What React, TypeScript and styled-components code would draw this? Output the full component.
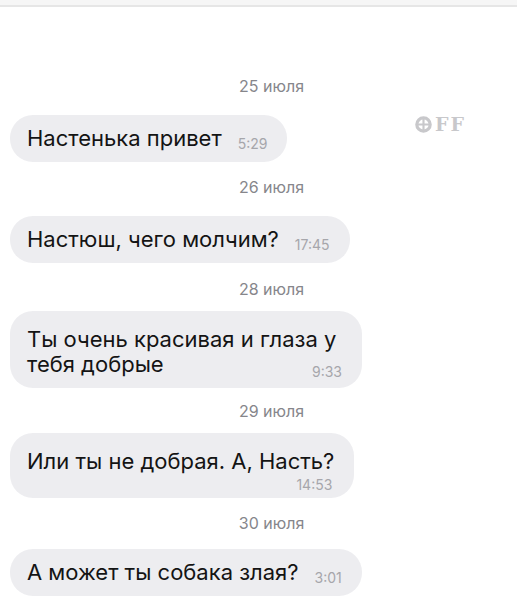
import styled, { createGlobalStyle } from "styled-components";

const GlobalStyle = createGlobalStyle`
  body {
    margin: 0;
    background: #ffffff;
    font-family: Inter, "Liberation Sans", Arial, sans-serif;
  }
`;

const Page = styled.div`
  position: relative;
  width: 517px;
  min-height: 600px;
  overflow: hidden;
  background: #ffffff;
`;

const TopBar = styled.div`
  height: 5px;
  background: #f6f6f6;
  border-bottom: 2px solid #e6e6e6;
`;

const Feed = styled.div`
  display: flex;
  flex-direction: column;
  align-items: flex-start;
  padding: 0 10px;
`;

const DateLabel = styled.div<{ $above: number; $below: number }>`
  align-self: stretch;
  margin: ${(p) => p.$above}px 0 ${(p) => p.$below}px;
  padding-left: 26px;
  text-align: center;
  font-size: 16px;
  line-height: 18px;
  color: #86868b;
`;

type Layout = "inline" | "wrap" | "below";

const pad: Record<Layout, string> = {
  inline: "11px 20px 11px 17px",
  wrap: "16px 20px 9px 17px",
  below: "16px 20px 6px 17px",
};

const Bubble = styled.div<{ $layout: Layout }>`
  box-sizing: border-box;
  display: flow-root;
  max-width: 352px;
  padding: ${(p) => pad[p.$layout]};
  border-radius: 23px;
  background: #ededf0;
  color: #141414;
  font-size: 22px;
  line-height: 25px;
`;

const Time = styled.span<{ $layout: Layout }>`
  font-size: 14px;
  color: #a6a6ab;
  line-height: 14px;
  ${(p) =>
    p.$layout === "inline"
      ? `
    display: inline-block;
    margin-left: 16px;
    vertical-align: -3px;
  `
      : p.$layout === "wrap"
      ? `
    float: right;
    margin-top: 13px;
  `
      : `
    display: block;
    margin-top: 4px;
    margin-right: 2px;
    text-align: right;
  `}
`;

// watermark sitting over the feed
const Watermark = styled.div`
  position: absolute;
  left: 415px;
  top: 115px;
  display: flex;
  align-items: center;
  gap: 3px;
  color: #c8c8cb;
  font-family: "DejaVu Serif", "Liberation Serif", serif;
  font-weight: bold;
  font-size: 19px;
  line-height: 19px;
  letter-spacing: 2px;
`;

const messages: {
  date: string;
  above: number;
  below: number;
  text: string;
  time: string;
  layout: Layout;
}[] = [
  { date: "25 июля", above: 70, below: 20, text: "Настенька привет", time: "5:29", layout: "inline" },
  { date: "26 июля", above: 16, below: 20, text: "Настюш, чего молчим?", time: "17:45", layout: "inline" },
  { date: "28 июля", above: 17, below: 13, text: "Ты очень красивая и глаза у тебя добрые", time: "9:33", layout: "wrap" },
  { date: "29 июля", above: 14, below: 13, text: "Или ты не добрая. А, Насть?", time: "14:53", layout: "below" },
  { date: "30 июля", above: 16, below: 17, text: "А может ты собака злая?", time: "3:01", layout: "inline" },
];

export default function App() {
  return (
    <Page>
      <GlobalStyle />
      <TopBar />
      <Feed>
        {messages.map((m) => [
          <DateLabel key={m.date} $above={m.above} $below={m.below}>
            {m.date}
          </DateLabel>,
          <Bubble key={m.time} $layout={m.layout}>
            <span>{m.text}</span>
            <Time $layout={m.layout}>{m.time}</Time>
          </Bubble>,
        ])}
      </Feed>
      <Watermark>
        <svg width="17" height="17" viewBox="0 0 16 16">
          <circle cx="8" cy="8" r="6.3" fill="none" stroke="#c8c8cb" strokeWidth="3" />
          <path d="M8 2v12M2 8h12" stroke="#c8c8cb" strokeWidth="2" />
        </svg>
        <span>FF</span>
      </Watermark>
    </Page>
  );
}
